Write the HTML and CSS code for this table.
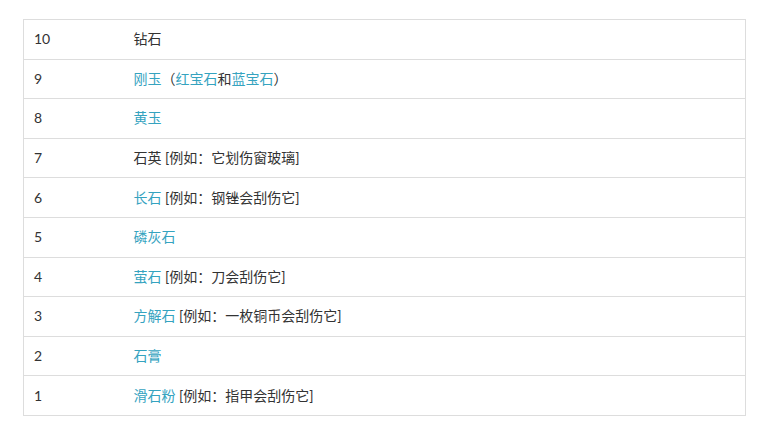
FILE: index.html
```html
<!DOCTYPE html>
<html lang="zh">
<head>
<meta charset="utf-8">
<link rel="stylesheet" href="styles.css">
</head>
<body>
<table class="hardness">
  <tbody>
    <tr><td class="num">10</td><td>钻石</td></tr>
    <tr><td class="num">9</td><td><a class="link">刚玉</a>（<a class="link">红宝石</a>和<a class="link">蓝宝石</a>）</td></tr>
    <tr><td class="num">8</td><td><a class="link">黄玉</a></td></tr>
    <tr><td class="num">7</td><td>石英 [例如：它划伤窗玻璃]</td></tr>
    <tr><td class="num">6</td><td><a class="link">长石</a> [例如：钢锉会刮伤它]</td></tr>
    <tr><td class="num">5</td><td><a class="link">磷灰石</a></td></tr>
    <tr><td class="num">4</td><td><a class="link">萤石</a> [例如：刀会刮伤它]</td></tr>
    <tr><td class="num">3</td><td><a class="link">方解石</a> [例如：一枚铜币会刮伤它]</td></tr>
    <tr><td class="num">2</td><td><a class="link">石膏</a></td></tr>
    <tr><td class="num">1</td><td><a class="link">滑石粉</a> [例如：指甲会刮伤它]</td></tr>
  </tbody>
</table>
</body>
</html>
```

FILE: styles.css
```css
html, body {
  margin: 0;
  padding: 0;
  background: #ffffff;
}
body {
  padding: 19px 22px 0 23px;
  font-family: Lato, "Noto Sans CJK SC", sans-serif;
  font-size: 14px;
  color: #333333;
}
.hardness {
  width: 723px;
  border-collapse: collapse;
  border: 1px solid #dddddd;
}
.hardness td {
  border-top: 1px solid #dddddd;
  padding: 0 10px;
  height: 39.6px;
  box-sizing: border-box;
  line-height: 20px;
  vertical-align: middle;
}
.hardness td.num {
  width: 100px;
  box-sizing: border-box;
}
.link {
  color: #35a3bf;
  text-decoration: none;
}
```
